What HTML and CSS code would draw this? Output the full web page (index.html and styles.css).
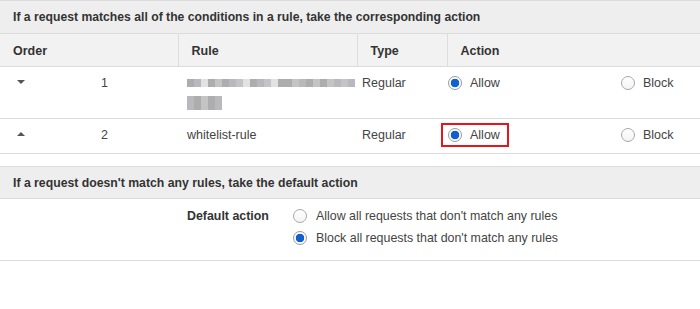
FILE: index.html
```html
<!DOCTYPE html>
<html lang="en">
<head>
  <meta charset="UTF-8">
  <title>Rules</title>
  <link rel="stylesheet" href="styles.css">
</head>
<body>
<div class="panel">
  <div class="band">If a request matches all of the conditions in a rule, take the corresponding action</div>
  <table class="rules">
    <colgroup>
      <col class="w-order">
      <col class="w-rule">
      <col class="w-type">
      <col class="w-allow">
      <col>
    </colgroup>
    <thead>
      <tr>
        <th>Order</th>
        <th>Rule</th>
        <th>Type</th>
        <th colspan="2">Action</th>
      </tr>
    </thead>
    <tbody>
      <tr>
        <td class="c-order"><span class="caret down"></span><span class="num">1</span></td>
        <td class="c-rule">
          <div class="mosaic">
            <i class="g2"></i><i class="g3"></i><i class="g0"></i><i class="g2"></i><i class="g1"></i><i class="g2"></i><i class="g3"></i><i class="g1"></i><i class="g0"></i><i class="g2"></i><i class="g3"></i><i class="g1"></i><i class="g0"></i><i class="g2"></i><i class="g2"></i><i class="g1"></i><i class="g3"></i><i class="g2"></i><i class="g1"></i><i class="g2"></i><i class="g1"></i><i class="g3"></i><i class="g1"></i><i class="g3"></i>
          </div>
          <div class="mosaic second">
            <i class="g3"></i><i class="g2"></i><i class="g1"></i><i class="g2"></i><i class="g3"></i>
          </div>
        </td>
        <td class="c-type">Regular</td>
        <td class="c-allow"><label class="opt"><input type="radio" name="r1" checked> Allow</label></td>
        <td class="c-block"><label class="opt"><input type="radio" name="r1"> Block</label></td>
      </tr>
      <tr>
        <td class="c-order"><span class="caret up"></span><span class="num">2</span></td>
        <td class="c-rule">whitelist-rule</td>
        <td class="c-type">Regular</td>
        <td class="c-allow"><label class="opt marked"><input type="radio" name="r2" checked> Allow</label></td>
        <td class="c-block"><label class="opt"><input type="radio" name="r2"> Block</label></td>
      </tr>
    </tbody>
  </table>
</div>

<div class="panel second-panel">
  <div class="band small">If a request doesn't match any rules, take the default action</div>
  <div class="defaults">
    <div class="label">Default action</div>
    <div class="choices">
      <label class="opt"><input type="radio" name="def"> Allow all requests that don't match any rules</label>
      <label class="opt"><input type="radio" name="def" checked> Block all requests that don't match any rules</label>
    </div>
  </div>
</div>
</body>
</html>
```

FILE: styles.css
```css
body {
  margin: 0;
  font-family: "Liberation Sans", Arial, sans-serif;
  font-size: 12.5px;
  color: #444;
  background: #fff;
}
.panel {
  border-top: 1px solid #dcdcdc;
  border-bottom: 1px solid #dcdcdc;
}
.second-panel {
  margin-top: 12px;
}
.band {
  background: #eeeeee;
  color: #333;
  font-size: 12.2px;
  font-weight: bold;
  line-height: 20px;
  padding: 6px 13px;
  border-bottom: 1px solid #dcdcdc;
}
.band.small {
  font-size: 12.25px;
  padding: 6px 13px 5px;
}
.rules {
  width: 100%;
  border-collapse: collapse;
  table-layout: fixed;
}
.w-order { width: 178px; }
.w-rule { width: 179px; }
.w-type { width: 90px; }
.w-allow { width: 174px; }
.rules th {
  background: #f2f2f2;
  color: #333;
  font-weight: bold;
  text-align: left;
  line-height: 20px;
  padding: 7px 0 5px 13px;
  border-bottom: 1px solid #dcdcdc;
  border-left: 1px solid #dedede;
}
.rules th:first-child {
  border-left: none;
}
.rules td {
  vertical-align: top;
  line-height: 20px;
  padding: 6px 0 5px;
  border-bottom: 1px solid #dcdcdc;
}
.rules tr:last-child td {
  border-bottom: none;
}
td.c-order {
  padding-left: 17px;
}
td.c-rule {
  padding-left: 9px;
}
td.c-type {
  padding-left: 5px;
}
td.c-allow {
  padding-left: 1px;
}
.caret {
  display: inline-block;
  width: 0;
  height: 0;
  border-left: 4px solid transparent;
  border-right: 4px solid transparent;
  vertical-align: middle;
  margin-top: -3px;
}
.caret.down {
  border-top: 4px solid #555;
}
.caret.up {
  border-bottom: 4px solid #555;
}
.num {
  margin-left: 76px;
}
.mosaic {
  display: flex;
  height: 20px;
  align-items: center;
}
.mosaic i {
  display: block;
  width: 7px;
  height: 8px;
}
.mosaic.second i {
  height: 14px;
}
.mosaic .g0 { background: #e2e2e2; }
.mosaic .g1 { background: #c4c4c4; }
.mosaic .g2 { background: #adadad; }
.mosaic .g3 { background: #b9b9bd; }
.opt {
  display: inline-flex;
  align-items: center;
  gap: 8px;
  line-height: 20px;
}
.opt.marked {
  position: relative;
}
.opt.marked::after {
  content: "";
  position: absolute;
  top: -2px;
  bottom: -2px;
  left: -7px;
  right: -9px;
  border: 2px solid #e8141b;
}
.opt input {
  appearance: none;
  -webkit-appearance: none;
  margin: 0;
  width: 14px;
  height: 14px;
  border-radius: 50%;
  border: 1px solid #a8a8a8;
  background: linear-gradient(#fff, #f4f4f4);
}
.opt input:checked {
  background: radial-gradient(circle, #1160d0 0, #1160d0 4px, #fff 4.6px);
  border-color: #9a9a9a;
}
.defaults {
  display: flex;
  padding: 7px 0 12px 187px;
  font-size: 12.4px;
}
.defaults .label {
  font-weight: bold;
  color: #333;
  line-height: 20px;
  width: 106px;
}
.choices {
  display: flex;
  flex-direction: column;
  gap: 2px;
}
.choices .opt {
  gap: 9px;
}
```
